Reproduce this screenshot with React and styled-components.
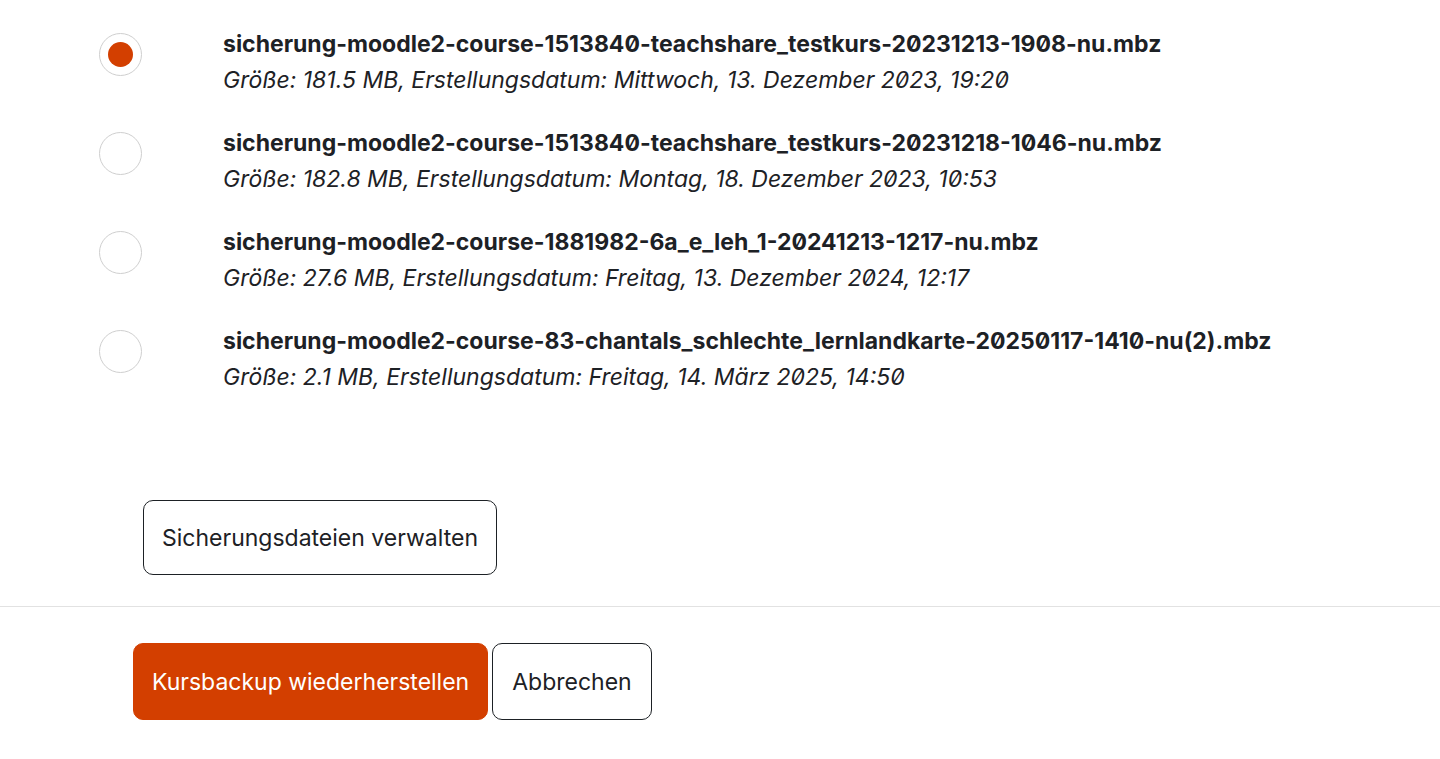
import React from "react";
import styled, { createGlobalStyle } from "styled-components";

const Global = createGlobalStyle`
  html, body { margin: 0; padding: 0; background: #fff; }
  body { font-family: Inter, "Noto Sans", sans-serif; color: #1d2125; }
  * { box-sizing: border-box; }
`;

const Page = styled.div`
  width: 1440px;
  height: 759px;
  overflow: hidden;
  display: flex;
  flex-direction: column;
`;

const List = styled.div`
  display: flex;
  flex-direction: column;
  gap: 27px;
  padding: 26px 0 0 99px;
`;

const Row = styled.label`
  display: flex;
  align-items: flex-start;
  gap: 81px;
`;

const Radio = styled.span`
  flex: none;
  width: 43px;
  height: 43px;
  margin-top: 7px;
  border-radius: 50%;
  border: 1px solid #cfcfcf;
  display: flex;
  align-items: center;
  justify-content: center;
  &::after {
    content: "";
    width: 25px;
    height: 25px;
    border-radius: 50%;
    background: #d33f00;
    display: ${(p) => (p.$checked ? "block" : "none")};
  }
`;

const Info = styled.div`
  display: flex;
  flex-direction: column;
  font-variant-numeric: slashed-zero;
`;

const FileName = styled.div`
  font-weight: 700;
  font-size: 23px;
  line-height: 36px;
  color: #1d2125;
`;

const Meta = styled.div`
  font-style: italic;
  font-size: 23px;
  line-height: 36px;
  color: #1d2125;
`;

const ManageWrap = styled.div`
  padding: 105px 0 31px 143px;
`;

const Button = styled.button`
  font-family: Inter, "Noto Sans", sans-serif;
  font-size: 23px;
  height: ${(p) => (p.$tall ? "77px" : "75px")};
  padding: 0 ${(p) => p.$pad ?? 18}px;
  border-radius: 10px;
  border: 1px solid ${(p) => (p.$primary ? "#d33f00" : "#1d2125")};
  background: ${(p) => (p.$primary ? "#d33f00" : "#fff")};
  color: ${(p) => (p.$primary ? "#fff" : "#1d2125")};
  cursor: pointer;
`;

const Divider = styled.hr`
  margin: 0;
  border: 0;
  border-top: 1px solid #e2e2e2;
`;

const Footer = styled.div`
  display: flex;
  gap: 4px;
  padding: 36px 0 0 133px;
`;

const files = [
  {
    name: "sicherung-moodle2-course-1513840-teachshare_testkurs-20231213-1908-nu.mbz",
    meta: "Größe: 181.5 MB, Erstellungsdatum: Mittwoch, 13. Dezember 2023, 19:20",
    checked: true,
  },
  {
    name: "sicherung-moodle2-course-1513840-teachshare_testkurs-20231218-1046-nu.mbz",
    meta: "Größe: 182.8 MB, Erstellungsdatum: Montag, 18. Dezember 2023, 10:53",
  },
  {
    name: "sicherung-moodle2-course-1881982-6a_e_leh_1-20241213-1217-nu.mbz",
    meta: "Größe: 27.6 MB, Erstellungsdatum: Freitag, 13. Dezember 2024, 12:17",
  },
  {
    name: "sicherung-moodle2-course-83-chantals_schlechte_lernlandkarte-20250117-1410-nu(2).mbz",
    meta: "Größe: 2.1 MB, Erstellungsdatum: Freitag, 14. März 2025, 14:50",
  },
];

export default function App() {
  return (
    <Page>
      <Global />
      <List>
        {files.map((f) => (
          <Row key={f.name}>
            <Radio $checked={f.checked} />
            <Info>
              <FileName>{f.name}</FileName>
              <Meta>{f.meta}</Meta>
            </Info>
          </Row>
        ))}
      </List>
      <ManageWrap>
        <Button>Sicherungsdateien verwalten</Button>
      </ManageWrap>
      <Divider />
      <Footer>
        <Button $primary $tall $pad={18}>Kursbackup wiederherstellen</Button>
        <Button $tall $pad={19}>Abbrechen</Button>
      </Footer>
    </Page>
  );
}
